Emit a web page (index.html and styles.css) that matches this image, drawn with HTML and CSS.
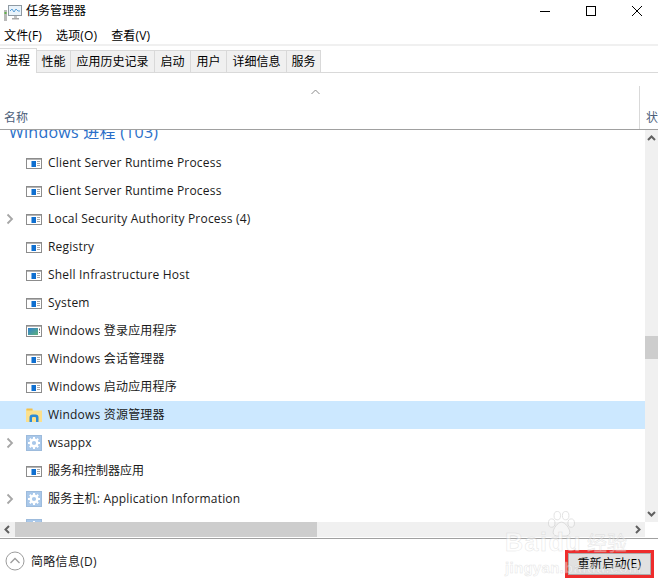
FILE: index.html
```html
<!DOCTYPE html>
<html lang="zh-CN">
<head>
<meta charset="utf-8">
<title>任务管理器</title>
<link rel="stylesheet" href="styles.css">
</head>
<body>
<svg class="defs" width="0" height="0" aria-hidden="true">
  <defs>
    <linearGradient id="lg" x1="0" y1="0" x2="1" y2="1">
      <stop offset="0" stop-color="#2f7fd0"/>
      <stop offset="1" stop-color="#5fb27a"/>
    </linearGradient>
  </defs>
  <symbol id="app" viewBox="0 0 16 11">
    <rect x="0.500" y="0.500" width="15" height="10" fill="#fff" stroke="#8c8c8c"/>
    <rect x="1" y="1" width="14" height="1" fill="#b4b4b4"/>
    <rect x="5" y="3" width="5" height="6" fill="#0f6fd0"/>
    <rect x="5" y="3" width="1" height="6" fill="#7fb4e8"/>
    <path d="M11 3.500h3M11 5.500h3M11 7.500h3" stroke="#a8a8a8"/>
  </symbol>
  <symbol id="login" viewBox="0 0 16 12">
    <rect x="0.500" y="0.500" width="15" height="11" fill="#fff" stroke="#8c8c8c"/>
    <rect x="1" y="1" width="14" height="1" fill="#b4b4b4"/>
    <rect x="2" y="3" width="10" height="7" fill="url(#lg)"/>
    <path d="M13.500 3.500v2M13.500 7v1" stroke="#666"/>
  </symbol>
  <symbol id="gear" viewBox="0 0 16 16">
    <rect x="0.500" y="0.500" width="15" height="15" fill="#a9c8ea" stroke="#9dbbdc"/>
    <circle cx="8" cy="8" r="3.300" fill="none" stroke="#fff" stroke-width="2.400"/>
    <path d="M8 2v2M8 12v2M2 8h2M12 8h2M3.800 3.800l1.400 1.400M10.800 10.800l1.400 1.400M3.800 12.200l1.400-1.400M10.800 5.200l1.400-1.400" stroke="#fff" stroke-width="2"/>
  </symbol>
  <symbol id="folder" viewBox="0 0 16 14">
    <path d="M0 1h6l1.500 1.500H16V14H0z" fill="#fbe08d"/>
    <rect x="0.500" y="0.500" width="6" height="2" fill="#f1c04c"/>
    <path d="M3.500 14V9.500Q3.500 6.500 6.500 6.500H9.500Q12.500 6.500 12.500 9.500V14H10V10Q10 9 9 9H7Q6 9 6 10V14z" fill="#2b8ad6"/>
  </symbol>
  <symbol id="chev" viewBox="0 0 8 12">
    <path d="M1.500 1.500L6 6l-4.500 4.500" fill="none" stroke="#a6a6a6" stroke-width="1.800"/>
  </symbol>
</svg>

<div class="window">
  <header class="titlebar">
    <svg class="title-icon" width="18" height="16" viewBox="0 0 18 16">
      <rect x="0" y="5" width="3" height="11" fill="#b9b9b9"/>
      <rect x="0.500" y="7" width="2" height="2" fill="#62b04a"/>
      <rect x="4.500" y="0.500" width="13" height="10" fill="#e9f3fb" stroke="#8f9aa3"/>
      <path d="M6 6l2-2 2 3 2-3 2 2h2" fill="none" stroke="#5aa0d8"/>
      <path d="M8 13h7v1.500H8z" fill="#a8a8a8"/>
      <rect x="10" y="11" width="3" height="2" fill="#c4c4c4"/>
    </svg>
    <span class="title-text">任务管理器</span>
    <div class="win-controls">
      <svg width="10" height="10" viewBox="0 0 10 10"><path d="M0 5.500h10" stroke="#000"/></svg>
      <svg width="10" height="10" viewBox="0 0 10 10"><rect x="0.500" y="0.500" width="9" height="9" fill="none" stroke="#000"/></svg>
      <svg width="10" height="10" viewBox="0 0 10 10"><path d="M0 0l10 10M10 0L0 10" stroke="#000"/></svg>
    </div>
  </header>

  <nav class="menubar">
    <span>文件(F)</span>
    <span>选项(O)</span>
    <span>查看(V)</span>
  </nav>

  <div class="tabs">
    <div class="tab active w37">进程</div>
    <div class="tab w34">性能</div>
    <div class="tab w84">应用历史记录</div>
    <div class="tab w36">启动</div>
    <div class="tab w36">用户</div>
    <div class="tab w60">详细信息</div>
    <div class="tab w34">服务</div>
  </div>

  <div class="columns">
    <div class="col-name">
      <svg class="sort" width="9" height="6" viewBox="0 0 9 6"><path d="M0.500 5L4.500 1l4 4" fill="none" stroke="#8a8a8a"/></svg>
      <span>名称</span>
    </div>
    <div class="col-status"><span>状</span></div>
  </div>

  <div class="middle">
    <div class="list-area">
      <div class="list">
        <div class="group">Windows 进程 (103)</div>
        <div class="row"><span class="exp"></span><svg class="ico"><use href="#app"/></svg><span class="label">Client Server Runtime Process</span></div>
        <div class="row"><span class="exp"></span><svg class="ico"><use href="#app"/></svg><span class="label">Client Server Runtime Process</span></div>
        <div class="row"><svg class="exp"><use href="#chev"/></svg><svg class="ico"><use href="#app"/></svg><span class="label">Local Security Authority Process (4)</span></div>
        <div class="row"><span class="exp"></span><svg class="ico"><use href="#app"/></svg><span class="label">Registry</span></div>
        <div class="row"><span class="exp"></span><svg class="ico"><use href="#app"/></svg><span class="label">Shell Infrastructure Host</span></div>
        <div class="row"><span class="exp"></span><svg class="ico"><use href="#app"/></svg><span class="label">System</span></div>
        <div class="row"><span class="exp"></span><svg class="ico h12"><use href="#login"/></svg><span class="label">Windows 登录应用程序</span></div>
        <div class="row"><span class="exp"></span><svg class="ico"><use href="#app"/></svg><span class="label">Windows 会话管理器</span></div>
        <div class="row"><span class="exp"></span><svg class="ico"><use href="#app"/></svg><span class="label">Windows 启动应用程序</span></div>
        <div class="row selected"><span class="exp"></span><svg class="ico h14"><use href="#folder"/></svg><span class="label">Windows 资源管理器</span></div>
        <div class="row"><svg class="exp"><use href="#chev"/></svg><svg class="ico h16"><use href="#gear"/></svg><span class="label">wsappx</span></div>
        <div class="row"><span class="exp"></span><svg class="ico"><use href="#app"/></svg><span class="label cjk">服务和控制器应用</span></div>
        <div class="row"><svg class="exp"><use href="#chev"/></svg><svg class="ico h16"><use href="#gear"/></svg><span class="label">服务主机: Application Information</span></div>
        <div class="row"><svg class="exp"><use href="#chev"/></svg><svg class="ico h16"><use href="#gear"/></svg></div>
      </div>
      <div class="vscroll">
        <svg class="arrow" width="9" height="6" viewBox="0 0 9 6"><path d="M1 5l3.500-3.500L8 5" fill="none" stroke="#606060" stroke-width="2"/></svg>
        <div class="vthumb"></div>
        <svg class="arrow down" width="9" height="6" viewBox="0 0 9 6"><path d="M1 1l3.500 3.500L8 1" fill="none" stroke="#606060" stroke-width="2"/></svg>
      </div>
    </div>
    <div class="hscroll-row">
      <div class="hscroll">
        <svg class="harrow" width="6" height="9" viewBox="0 0 6 9"><path d="M5 1L1.500 4.500 5 8" fill="none" stroke="#606060" stroke-width="2"/></svg>
        <div class="hthumb"></div>
        <svg class="harrow right" width="6" height="9" viewBox="0 0 6 9"><path d="M1 1l3.500 3.500L1 8" fill="none" stroke="#606060" stroke-width="2"/></svg>
      </div>
    </div>
  </div>

  <footer class="footer">
    <div class="fewer">
      <svg width="20" height="20" viewBox="0 0 20 20"><circle cx="10" cy="10" r="9" fill="#fff" stroke="#9c9c9c"/><path d="M5.500 12L10 7.500l4.500 4.500" fill="none" stroke="#9c9c9c" stroke-width="1.300"/></svg>
      <span>简略信息(D)</span>
    </div>
    <div class="btn-mark"><button class="restart" type="button">重新启动(E)</button></div>
  </footer>

  <div class="watermark" aria-hidden="true">
    <svg class="paw" width="32" height="26" viewBox="0 0 32 28">
      <g fill="#fff" stroke="#bdbdbd" stroke-width="1">
        <ellipse cx="6" cy="13" rx="3.500" ry="4.500"/>
        <ellipse cx="12" cy="5" rx="3.500" ry="4.500"/>
        <ellipse cx="21" cy="5" rx="3.500" ry="4.500"/>
        <ellipse cx="27" cy="13" rx="3.500" ry="4.500"/>
        <path d="M16.500 12c-4 0-9 7-9 11 0 3 3 4 5 4h8c2 0 5-1 5-4 0-4-5-11-9-11z"/>
      </g>
    </svg>
    <div class="wm-line"><span class="wm-big">Baidu</span><span class="wm-cn">经验</span></div>
    <div class="wm-url">jingyan.baidu.com</div>
  </div>
</div>
</body>
</html>
```
FILE: styles.css
```css
* { box-sizing: border-box; }
html, body { margin: 0; padding: 0; }
body {
  width: 658px;
  height: 583px;
  overflow: hidden;
  background: #fff;
  color: #1a1a1a;
  font-family: "Open Sans", "Noto Sans CJK SC", sans-serif;
  font-size: 12px;
}
.defs { position: absolute; }
.window {
  position: relative;
  width: 658px;
  height: 583px;
  display: flex;
  flex-direction: column;
}
.titlebar {
  height: 22px;
  display: flex;
  align-items: center;
  padding-left: 4px;
  flex: none;
}
.title-icon { flex: none; margin-right: 4px; margin-top: 4px; }
.title-text { font-size: 12px; color: #000; margin-top: -2px; }
.win-controls {
  margin-left: auto;
  display: flex;
  align-items: center;
  gap: 36px;
  padding-right: 16px;
  margin-top: -1px;
}
.win-controls svg { display: block; }
.menubar {
  height: 22px;
  flex: none;
  display: flex;
  align-items: center;
  gap: 14px;
  padding: 3px 0 0 4px;
  color: #000;
  letter-spacing: 0.15px;
}
.tabs {
  height: 29px;
  flex: none;
  border-top: 2px solid #f0f0f0;
  border-bottom: 1px solid #d9d9d9;
  display: flex;
  align-items: flex-end;
  padding-top: 2px;
}
.tab {
  height: 22px;
  background: #f0f0f0;
  border: 1px solid #d9d9d9;
  border-bottom: 0;
  border-left: 0;
  display: flex;
  align-items: center;
  justify-content: center;
  color: #000;
  padding-bottom: 2px;
}
.tab.active {
  height: 25px;
  background: #fff;
  margin-bottom: -1px;
  padding-bottom: 3px;
}
.w34 { width: 34px; }
.w36 { width: 36px; }
.w37 { width: 37px; }
.w60 { width: 60px; }
.w84 { width: 84px; }
.columns {
  height: 57px;
  flex: none;
  display: flex;
  border-bottom: 1px solid #a0a0a0;
}
.col-name {
  flex: 1;
  display: flex;
  flex-direction: column;
  align-items: flex-start;
  padding-left: 4px;
  color: #4c607a;
  position: relative;
}
.col-name span { margin-top: 35px; }
.sort { position: absolute; left: 311px; top: 16px; }
.col-status {
  width: 19px;
  margin-top: 13px;
  border-left: 1px solid #d9d9d9;
  padding-left: 6px;
  padding-top: 22px;
  overflow: hidden;
  color: #4c607a;
  white-space: nowrap;
}
.middle {
  height: 409px;
  flex: none;
  border-bottom: 1px solid #a0a0a0;
  display: flex;
  flex-direction: column;
}
.list-area {
  flex: 1;
  min-height: 0;
  display: flex;
  overflow: hidden;
}
.list {
  flex: 1;
  min-width: 0;
  overflow: hidden;
}
.group {
  height: 31px;
  margin-top: -12px;
  padding-left: 9px;
  font-size: 16px;
  line-height: 28px;
  letter-spacing: 0.25px;
  color: #2a6fc9;
  white-space: nowrap;
}
.row {
  height: 28px;
  display: flex;
  align-items: center;
  color: #1a1a1a;
  font-size: 12px;
  white-space: nowrap;
}
.label {
  letter-spacing: 0.2px;
  padding-bottom: 2px;
}
.label.cjk { letter-spacing: 0; }
.row.selected { background: #cce8ff; }
.exp {
  width: 8px;
  height: 12px;
  flex: none;
  margin-left: 6px;
  margin-right: 12px;
}
.ico {
  width: 16px;
  height: 11px;
  flex: none;
  margin-right: 6px;
}
.ico.h12 { height: 12px; }
.ico.h14 { height: 14px; }
.ico.h16 { height: 16px; }
.vscroll {
  width: 13px;
  flex: none;
  background: #f0f0f0;
  display: flex;
  flex-direction: column;
  align-items: center;
}
.arrow { flex: none; margin-top: 5px; margin-bottom: 195px; }
.arrow.down { margin-top: auto; margin-bottom: 5px; }
.vthumb { width: 13px; height: 23px; background: #cdcdcd; flex: none; }
.hscroll-row { height: 16px; flex: none; padding-right: 13px; }
.hscroll {
  height: 15px;
  background: #f0f0f0;
  display: flex;
  align-items: center;
}
.harrow { flex: none; margin-left: 4px; margin-right: 5px; }
.harrow.right { margin-left: auto; margin-right: 4px; }
.hthumb { width: 302px; height: 15px; background: #cdcdcd; flex: none; }
.footer {
  flex: 1;
  display: flex;
  align-items: center;
  justify-content: space-between;
  padding: 0 4px 0 5px;
}
.fewer { display: flex; align-items: center; gap: 6px; color: #1a1a1a; letter-spacing: 0.3px; }
.fewer svg { display: block; }
.btn-mark {
  border: 3px solid #ee2c2c;
  margin-top: 5px;
}
.restart {
  display: block;
  width: 83px;
  height: 22px;
  padding: 0 0 2px;
  background: #e1e1e1;
  border: 1px solid #adadad;
  font: inherit;
  letter-spacing: 0.3px;
  color: #000;
}
.watermark {
  position: absolute;
  left: 505px;
  top: 511px;
  width: 125px;
  color: #fff;
  opacity: 0.45;
  pointer-events: none;
  font-family: "Liberation Sans", "Noto Sans CJK SC", sans-serif;
  -webkit-text-stroke: 0.5px #c4c4c4;
  white-space: nowrap;
}
.paw { display: block; margin-left: 40px; }
.wm-line { display: flex; align-items: baseline; margin-top: -8px; line-height: 26px; }
.wm-big { font-size: 25px; font-weight: 700; letter-spacing: 1.500px; }
.wm-cn { font-size: 20px; margin-left: 5px; }
.wm-url { font-size: 15px; line-height: 18px; margin-top: 2px; font-weight: 700; letter-spacing: 0.3px; }
```
